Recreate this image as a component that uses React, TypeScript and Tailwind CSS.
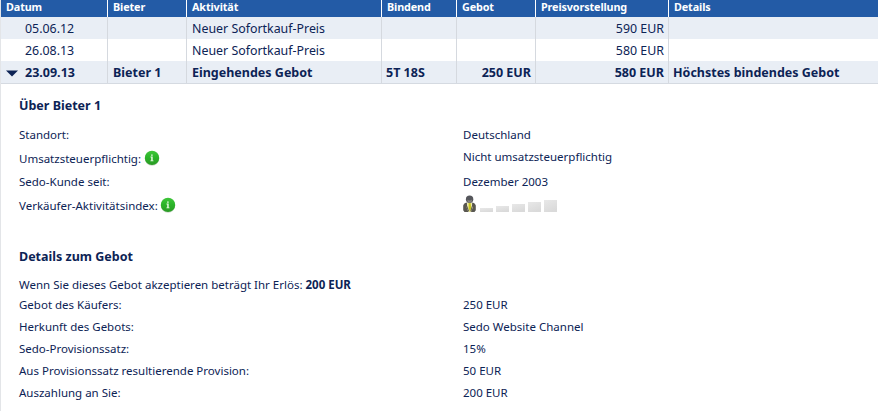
import React from "react";

const rows = [
  { date: "05.06.12", bidder: "", activity: "Neuer Sofortkauf-Preis", binding: "", bid: "", price: "590 EUR", details: "" },
  { date: "26.08.13", bidder: "", activity: "Neuer Sofortkauf-Preis", binding: "", bid: "", price: "580 EUR", details: "" },
  { date: "23.09.13", bidder: "Bieter 1", activity: "Eingehendes Gebot", binding: "5T 18S", bid: "250 EUR", price: "580 EUR", details: "Höchstes bindendes Gebot", open: true },
];

const grid = "grid grid-cols-[107px_79px_195px_75px_79px_133px_1fr]";
const headers = ["Datum", "Bieter", "Aktivität", "Bindend", "Gebot", "Preisvorstellung", "Details"];

function InfoIcon() {
  return (
    <svg width="16" height="16" viewBox="0 0 16 16" className="shrink-0">
      <defs>
        <linearGradient id="info" x1="0" y1="0" x2="0" y2="1">
          <stop offset="0" stopColor="#3fc63a" />
          <stop offset="0.45" stopColor="#2cb52a" />
          <stop offset="1" stopColor="#2a9a24" />
        </linearGradient>
      </defs>
      <ellipse cx="8" cy="8.6" rx="7.2" ry="7.2" fill="#c9d6c8" />
      <circle cx="8" cy="7.9" r="7.2" fill="url(#info)" />
      <path d="M7.1 4.4h1.6v1.4H7.1zM6.5 6.6h2.2v3.9h.8v.8H6.4v-.8h.8V7.4h-.7z" fill="#e6fbe2" />
    </svg>
  );
}

function ActivityIndex() {
  return (
    <svg width="96" height="18" viewBox="0 0 96 18" className="block">
      <defs>
        <linearGradient id="bar" x1="0" y1="0" x2="0.5" y2="1">
          <stop offset="0" stopColor="#e8e8e8" />
          <stop offset="1" stopColor="#dadada" />
        </linearGradient>
      </defs>
      <path d="M0.2 15.2V10.5Q0.5 8.4 3.2 7.6L6.5 9L9.8 7.6Q12.5 8.4 12.8 10.5V15.2L11.5 17H1.5z" fill="#595751" />
      <path d="M4 7.6h5l.8 4.8-1.8 4.6H5.3l-1.6-4.3z" fill="#ece9ad" />
      <path d="M5.6 7.8h2l.7 5.2L7 16.6l-1.4-3.3z" fill="#c9c51e" />
      <path d="M2.8 8.4l2.8 7.9M10.2 8.4L7.8 16.3" stroke="#54524d" strokeWidth="1" />
      <circle cx="6.6" cy="4.2" r="3.7" fill="#55565b" />
      <path d="M4.2 4.5q2.4 2 4.9 0l-.6 2.4q-1.8 1.5-3.7 0z" fill="#84837d" />
      <rect x="17" y="13" width="13" height="4" fill="url(#bar)" />
      <rect x="33" y="11" width="13" height="6" fill="url(#bar)" />
      <rect x="49" y="9" width="13" height="8" fill="url(#bar)" />
      <rect x="65" y="7" width="13" height="10" fill="url(#bar)" />
      <rect x="81" y="5" width="13" height="12" fill="url(#bar)" />
    </svg>
  );
}

function Field({ label, value, info, className }: { label: string; value: React.ReactNode; info?: boolean; className: string }) {
  return (
    <div className={`grid grid-cols-[444px_1fr] ${className}`}>
      <div className="flex items-center gap-[2.5px]">
        <span>{label}</span>
        {info && <span className="-mt-0.5"><InfoIcon /></span>}
      </div>
      <div>{value}</div>
    </div>
  );
}

export default function App() {
  return (
    <div className="h-[411px] w-[878px] overflow-hidden border-l border-[#e3e5e8] bg-white font-['Noto_Sans','Open_Sans',sans-serif] text-[#0c2355]">
      <div className={`${grid} -ml-px h-[17px] bg-[#235ba6] text-[10.8px] leading-[14px] font-bold tracking-[-0.12px] text-white`}>
        {headers.map((h) => (
          <div key={h} className="border-l border-white pl-[5px] whitespace-nowrap">{h}</div>
        ))}
      </div>
      {rows.map((r, i) => (
        <div
          key={r.date}
          className={`${grid} -ml-px leading-[24px] whitespace-nowrap *:border-l *:border-[#d5d9df] ${i % 2 === 0 ? "bg-[#e9eef5]" : "bg-white"} ${r.open ? "h-[23px] border-b border-[#d5dae1] text-[12.5px] font-bold" : "h-[22px] text-[12.4px]"}`}
        >
          <div className="flex h-[22px] pl-[5px]">
            <span className="flex w-[19px] items-center pt-[3px]">
              {r.open && (
                <svg width="12" height="7" viewBox="0 0 12 7"><path d="M0 .5h12L6 6.5z" fill="#0c2355" /></svg>
              )}
            </span>
            {r.date}
          </div>
          <div className="h-[22px] pl-[5px]">{r.bidder}</div>
          <div className="h-[22px] pl-[5px]">{r.activity}</div>
          <div className="h-[22px] pl-1">{r.binding}</div>
          <div className="h-[22px] pr-1 text-right">{r.bid}</div>
          <div className="h-[22px] pr-1 text-right">{r.price}</div>
          <div className="h-[22px] pl-1">{r.details}</div>
        </div>
      ))}
      <div className="pt-[11px] pl-[18px] text-[11.5px] leading-[22px] whitespace-nowrap">
        <h2 className="h-[29px] text-[12.5px] font-bold">Über Bieter 1</h2>
        <Field className="h-[22px]" label="Standort:" value="Deutschland" />
        <Field className="h-[25px]" label="Umsatzsteuerpflichtig:" info value="Nicht umsatzsteuerpflichtig" />
        <Field className="h-[22px]" label="Sedo-Kunde seit:" value="Dezember 2003" />
        <Field className="h-[26px]" label="Verkäufer-Aktivitätsindex:" info value={<div className="pt-[2px]"><ActivityIndex /></div>} />
        <h2 className="mt-[27px] h-[28px] text-[12.5px] font-bold">Details zum Gebot</h2>
        <p className="h-[20px]">Wenn Sie dieses Gebot akzeptieren beträgt Ihr Erlös: <b>200 EUR</b></p>
        <Field className="h-[22px]" label="Gebot des Käufers:" value="250 EUR" />
        <Field className="h-[22px]" label="Herkunft des Gebots:" value="Sedo Website Channel" />
        <Field className="h-[22px]" label="Sedo-Provisionssatz:" value="15%" />
        <Field className="h-[22px]" label="Aus Provisionssatz resultierende Provision:" value="50 EUR" />
        <Field className="h-[22px]" label="Auszahlung an Sie:" value="200 EUR" />
      </div>
    </div>
  );
}
